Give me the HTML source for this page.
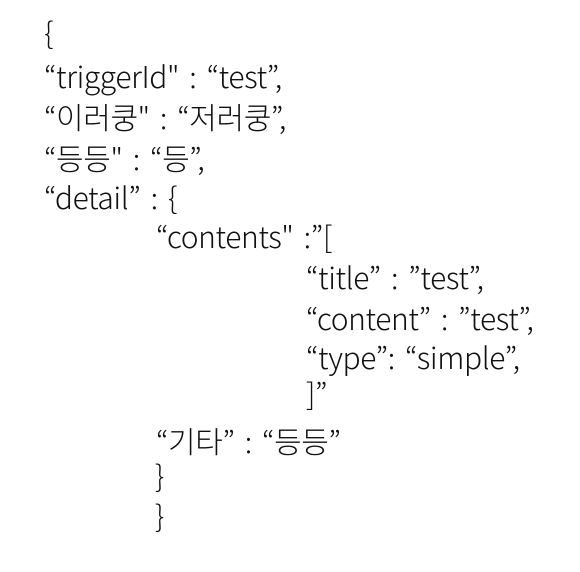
<!DOCTYPE html>
<html><head><meta charset="utf-8"><style>
html,body{margin:0;padding:0;background:#fff;width:580px;height:572px;overflow:hidden}
.l{position:absolute;white-space:pre;font-family:"Noto Sans CJK KR","Liberation Sans",sans-serif;font-weight:300;font-size:30px;color:#111;line-height:1;letter-spacing:-0.4px;word-spacing:4px}
</style></head><body>
<div class="l" style="left:44px;top:16px">{</div>
<div class="l" style="left:44px;top:60px">“triggerId" : “test”,</div>
<div class="l" style="left:44px;top:101px">“이러쿵" : “저러쿵”,</div>
<div class="l" style="left:44px;top:142px">“등등" : “등”,</div>
<div class="l" style="left:44px;top:181px">“detail” : {</div>
<div class="l" style="left:156px;top:220px">“contents" :”[</div>
<div class="l" style="left:306px;top:261px">“title” : ”test”,</div>
<div class="l" style="left:306px;top:302px">“content” : ”test”,</div>
<div class="l" style="left:306px;top:341px">“type”: “simple”,</div>
<div class="l" style="left:306px;top:377px">]”</div>
<div class="l" style="left:156px;top:425px">“기타” : “등등”</div>
<div class="l" style="left:155px;top:459px">}</div>
<div class="l" style="left:155px;top:499px">}</div>
</body></html>
